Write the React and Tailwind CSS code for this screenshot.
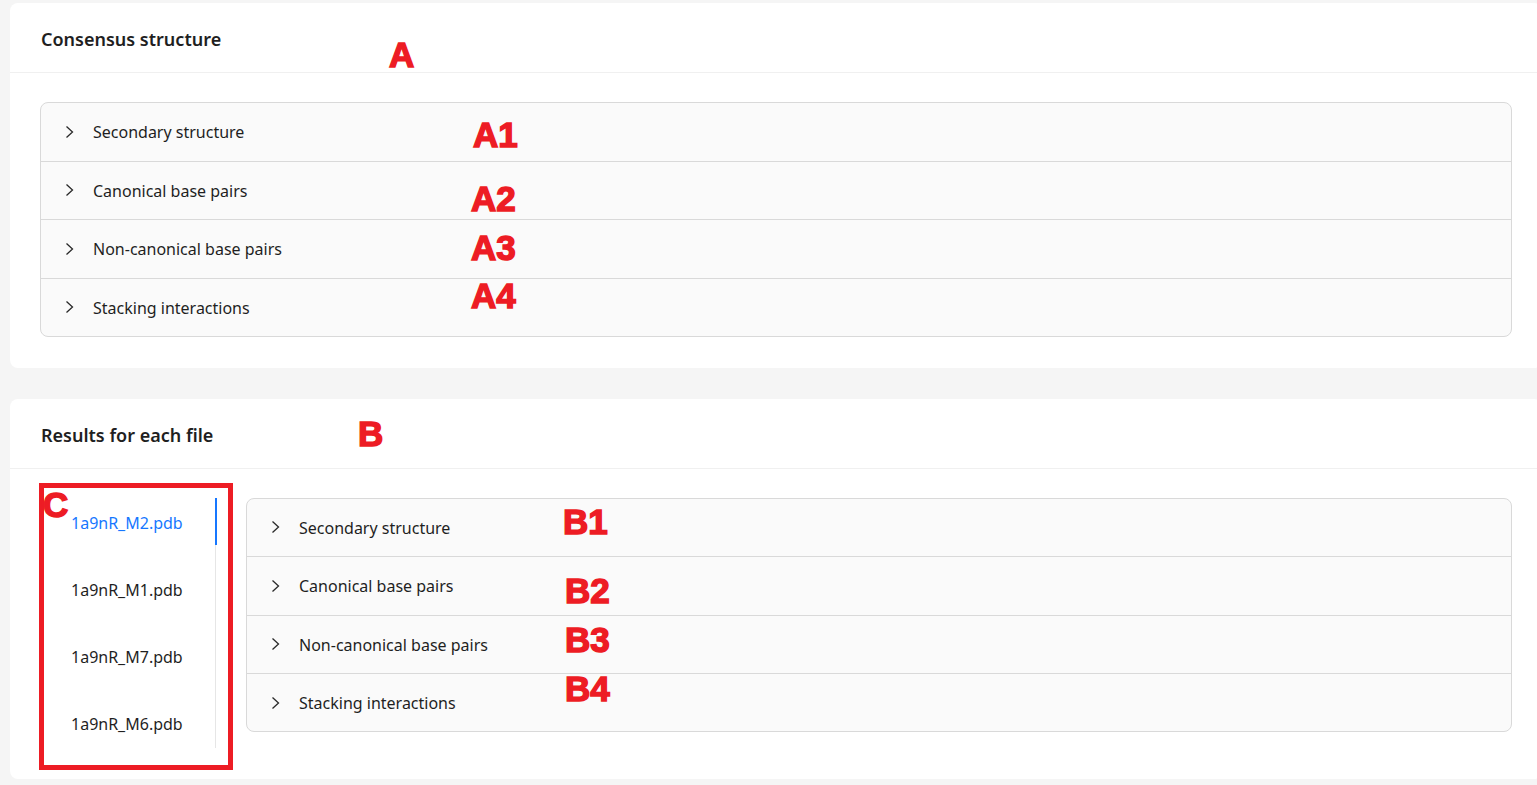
import { useState } from 'react'

const SECTIONS = [
  'Secondary structure',
  'Canonical base pairs',
  'Non-canonical base pairs',
  'Stacking interactions',
]

const FILES = ['1a9nR_M2.pdb', '1a9nR_M1.pdb', '1a9nR_M7.pdb', '1a9nR_M6.pdb']

// red markers drawn on top of the screenshot
const MARKS = [
  { label: 'A', className: 'left-[389px] top-[37px]' },
  { label: 'A1', className: 'left-[473px] top-[117px]' },
  { label: 'A2', className: 'left-[471px] top-[181px]' },
  { label: 'A3', className: 'left-[471px] top-[230px]' },
  { label: 'A4', className: 'left-[471px] top-[278px]' },
  { label: 'B', className: 'left-[358px] top-[416px]' },
  { label: 'B1', className: 'left-[563px] top-[504px]' },
  { label: 'B2', className: 'left-[565px] top-[573px]' },
  { label: 'B3', className: 'left-[565px] top-[622px]' },
  { label: 'B4', className: 'left-[565px] top-[671px]' },
  { label: 'C', className: 'left-[43px] top-[487px]' },
]

function Chevron() {
  return (
    <svg className="h-4 w-4 shrink-0" viewBox="0 0 16 16" fill="none">
      <path d="M1.5 2.5 L7.5 8 L1.5 13.5" stroke="#2a2a2a" strokeWidth="1.3" />
    </svg>
  )
}

function Collapse() {
  return (
    <div className="flex-1 overflow-hidden rounded-lg border border-[#d9d9d9] bg-[#fafafa]">
      {SECTIONS.map((title, i) => (
        <div
          key={title}
          className={
            'flex items-center gap-3 px-6 text-base text-[#1f1f1f] ' +
            (i < SECTIONS.length - 1 ? 'h-[58.5px] border-b border-[#d9d9d9]' : 'h-[57px]')
          }
        >
          <Chevron />
          <span className="pt-px">{title}</span>
        </div>
      ))}
    </div>
  )
}

function Card({ title, children }) {
  return (
    <div className="w-[1532px] rounded-lg bg-white">
      <div className="flex h-[70px] items-center border-b border-[#f0f0f0] px-[31px] pt-1 text-[18px] font-semibold text-[#1f1f1f]">
        {title}
      </div>
      <div className="px-[30px] pt-[29px] pb-[31px]">{children}</div>
    </div>
  )
}

function FileTabs({ active, onSelect }) {
  return (
    <div className="flex h-[250px] w-[176px] shrink-0 flex-col gap-5 border-r border-[#e6e6e6]">
      {FILES.map((name, i) => (
        <button
          key={name}
          onClick={() => onSelect(i)}
          className={
            'relative flex h-[47px] items-center pt-[3px] pl-[31px] text-left text-base ' +
            (i === active ? 'text-[#1677ff]' : 'text-[#1f1f1f]')
          }
        >
          {name}
          {i === active && (
            <span className="absolute top-0 right-[-1.5px] h-full w-[2px] bg-[#1677ff]" />
          )}
        </button>
      ))}
    </div>
  )
}

export default function App() {
  const [active, setActive] = useState(0)

  return (
    <div className="relative h-[785px] w-full overflow-hidden bg-[#f5f5f5] pt-[3px] pl-[10px] font-['Noto_Sans',sans-serif]">
      <Card title="Consensus structure">
        <div className="flex">
          <Collapse />
        </div>
      </Card>

      <div className="h-[31px]" />

      <Card title="Results for each file">
        <div className="flex items-start gap-[30px]">
          <FileTabs active={active} onSelect={setActive} />
          <Collapse />
        </div>
      </Card>

      <div className="pointer-events-none absolute top-[483px] left-[39px] h-[287px] w-[194px] border-[5px] border-[#ed1c24]" />

      {MARKS.map((m) => (
        <span
          key={m.label}
          className={
            'pointer-events-none absolute text-[35px] leading-none font-bold text-[#ed1c24] [-webkit-text-stroke:1.5px_#ed1c24] font-["Liberation_Sans",Arial,sans-serif] ' +
            m.className
          }
        >
          {m.label}
        </span>
      ))}
    </div>
  )
}
